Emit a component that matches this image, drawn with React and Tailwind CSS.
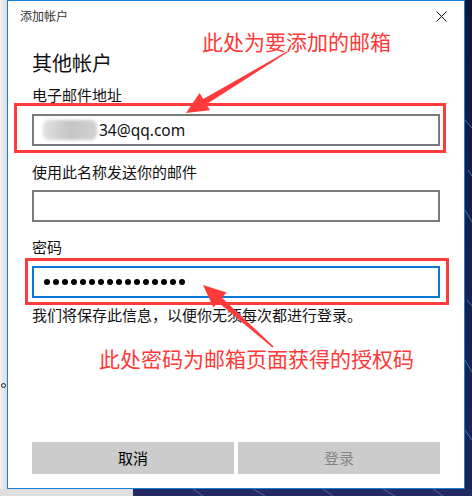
import React from "react";

const cjk = { fontFamily: '"Noto Sans CJK SC", "Noto Sans", sans-serif' };

function Dots() {
  return (
    <div className="flex items-center gap-[3px]">
      {Array.from({ length: 16 }).map((_, i) => (
        <span key={i} className="block w-[6px] h-[6px] rounded-full bg-black" />
      ))}
    </div>
  );
}

export default function App() {
  return (
    <div className="relative w-[472px] h-[496px] overflow-hidden flex flex-col" style={cjk}>
      <div className="flex h-[489px]">
        <div className="w-[7px] flex flex-col bg-gradient-to-r from-[#f2f2f2] to-[#dcdcdc]">
          <span className="mt-[383px] ml-[1px] block w-[5px] h-[5px] rounded-full border border-[#222]" />
        </div>
        <div className="w-[458px] h-[489px] bg-white border border-[#1b7fd6] flex flex-col">
          <div className="h-[30px] flex items-center justify-between pl-[12px] pr-[17px]">
            <span className="text-[12px] leading-[16px] text-[#333]">添加帐户</span>
            <svg width="11" height="11" viewBox="0 0 11 11" className="mt-[1px]">
              <path d="M0.5 0.5 L10.5 10.5 M10.5 0.5 L0.5 10.5" stroke="#111" strokeWidth="1" fill="none" />
            </svg>
          </div>
          <div className="flex flex-col flex-1 px-6 pb-[14px]">
            <div className="mt-[18px] text-[20px] leading-[28px] text-[#111]">其他帐户</div>
            <div className="mt-[8px] text-[15px] leading-[20px] text-[#111]">电子邮件地址</div>
            <div className="mt-[9px] h-[32px] border-2 border-[#7a7a7a] flex items-center pl-[9px]">
              <div className="w-[56px] h-[22px] flex items-center">
                <div className="w-[54px] h-[20px] rounded-[6px] bg-gradient-to-r from-[#e2e2e2] via-[#c4c4c4] to-[#d2d2d2] blur-[1.5px]" />
              </div>
              <span className="text-[15.5px] leading-[20px] text-[#111]" style={{ fontFamily: '"Noto Sans", "Open Sans", sans-serif' }}>34@qq.com</span>
            </div>
            <div className="mt-[16px] text-[15px] leading-[20px] text-[#111]">使用此名称发送你的邮件</div>
            <div className="mt-[8px] h-[32px] border-2 border-[#7a7a7a]" />
            <div className="mt-[15px] text-[15px] leading-[20px] text-[#111]">密码</div>
            <div className="mt-[9px] h-[32px] border-2 border-[#0a78d4] flex items-center pl-[10px]">
              <Dots />
            </div>
            <div className="mt-[7px] text-[15px] leading-[20px] text-[#111]">我们将保存此信息，以便你无须每次都进行登录。</div>
            <div className="mt-auto flex gap-[4px]">
              <div className="flex-1 h-[32px] bg-[#cccccc] flex items-center justify-center text-[15px] text-black">取消</div>
              <div className="flex-1 h-[32px] bg-[#cccccc] flex items-center justify-center text-[15px] text-[#858585]">登录</div>
            </div>
          </div>
        </div>
        <div className="flex-1 bg-gradient-to-b from-[#0e1638] via-[#15204d] to-[#1c2558]">
          <svg width="7" height="489" viewBox="0 0 7 489">
            <path d="M0 120 L7 128 M0 210 L7 222 M2 300 L7 306 M0 360 L7 372 M0 430 L7 440 M3 170 L7 176" stroke="#7aa6d6" strokeWidth="1" opacity="0.6" />
          </svg>
        </div>
      </div>
      <div className="flex h-[7px]">
        <div className="w-[133px] bg-[#dedede]" />
        <div className="flex-1 bg-[#232a62]">
          <svg width="339" height="7" viewBox="0 0 339 7">
            <path d="M60 0 L70 7 M120 0 L132 7 M190 0 L200 7 M250 0 L262 7 M300 0 L310 7" stroke="#8fa4d8" strokeWidth="1" opacity="0.5" />
          </svg>
        </div>
      </div>

      {/* annotations */}
      <div className="absolute left-[14px] top-[103px] w-[432px] h-[50px] border-[3px] border-[#ff3b3b]" />
      <div className="absolute left-[25px] top-[258px] w-[424px] h-[47px] border-[3px] border-[#ff3b3b]" />
      <div className="absolute left-[202px] top-[31px] text-[21px] leading-[21px] text-[#ff3838] whitespace-nowrap">此处为要添加的邮箱</div>
      <div className="absolute left-[99px] top-[348px] text-[21px] leading-[21px] text-[#ff3838] whitespace-nowrap">此处密码为邮箱页面获得的授权码</div>
      <svg className="absolute left-0 top-0 pointer-events-none" width="472" height="496" viewBox="0 0 472 496">
        <polygon points="286.7,51.6 203.3,99.0 199.6,93.0 186,113 210.0,110.2 206.4,104.2 287.3,52.4" fill="#ff3b3b" />
        <polygon points="272.4,347.4 218,302.2 213.4,307.5 203,285 226.6,292.5 222,297.8 273.6,346.6" fill="#ff3b3b" />
      </svg>
    </div>
  );
}
